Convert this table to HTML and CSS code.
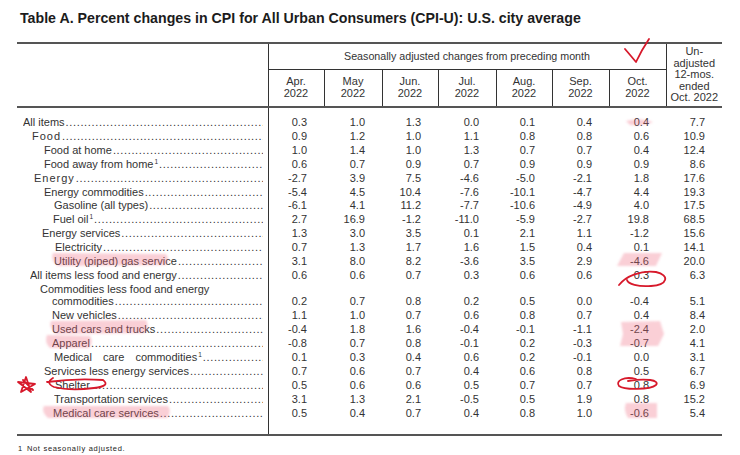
FILE: index.html
```html
<!DOCTYPE html>
<html>
<head>
<meta charset="utf-8">
<link rel="stylesheet" href="styles.css">
</head>
<body>
<div class="page">
  <h1 class="title">Table A. Percent changes in CPI for All Urban Consumers (CPI-U): U.S. city average</h1>
  <table class="cpi">
    <colgroup>
      <col class="c-lab"><col class="c56"><col class="c58"><col class="c56"><col class="c58"><col class="c56"><col class="c57"><col class="c57"><col class="c56">
    </colgroup>
    <thead>
      <tr class="hr1">
        <th class="lab-h" rowspan="2"></th>
        <th class="sa" colspan="7">Seasonally adjusted changes from preceding month</th>
        <th class="un" rowspan="2">Un-<br>adjusted<br>12-mos.<br>ended<br>Oct. 2022</th>
      </tr>
      <tr class="hr2">
        <th class="mo">Apr.<br>2022</th>
        <th class="mo">May<br>2022</th>
        <th class="mo">Jun.<br>2022</th>
        <th class="mo">Jul.<br>2022</th>
        <th class="mo">Aug.<br>2022</th>
        <th class="mo">Sep.<br>2022</th>
        <th class="mo">Oct.<br>2022</th>
      </tr>
    </thead>
    <tbody>
      <tr class="first"><td class="lab i6"><div class="lead"><span>All items</span></div></td><td>0.3</td><td>1.0</td><td>1.3</td><td>0.0</td><td>0.1</td><td>0.4</td><td>0.4</td><td>7.7</td></tr>
      <tr><td class="lab i15"><div class="lead"><span class="sp">Food</span></div></td><td>0.9</td><td>1.2</td><td>1.0</td><td>1.1</td><td>0.8</td><td>0.8</td><td>0.6</td><td>10.9</td></tr>
      <tr><td class="lab i27"><div class="lead"><span>Food at home</span></div></td><td>1.0</td><td>1.4</td><td>1.0</td><td>1.3</td><td>0.7</td><td>0.7</td><td>0.4</td><td>12.4</td></tr>
      <tr><td class="lab i27"><div class="lead"><span>Food away from home<sup>1</sup></span></div></td><td>0.6</td><td>0.7</td><td>0.9</td><td>0.7</td><td>0.9</td><td>0.9</td><td>0.9</td><td>8.6</td></tr>
      <tr><td class="lab i17"><div class="lead"><span class="sp">Energy</span></div></td><td>-2.7</td><td>3.9</td><td>7.5</td><td>-4.6</td><td>-5.0</td><td>-2.1</td><td>1.8</td><td>17.6</td></tr>
      <tr><td class="lab i27"><div class="lead"><span>Energy commodities</span></div></td><td>-5.4</td><td>4.5</td><td>10.4</td><td>-7.6</td><td>-10.1</td><td>-4.7</td><td>4.4</td><td>19.3</td></tr>
      <tr><td class="lab i37"><div class="lead"><span>Gasoline (all types)</span></div></td><td>-6.1</td><td>4.1</td><td>11.2</td><td>-7.7</td><td>-10.6</td><td>-4.9</td><td>4.0</td><td>17.5</td></tr>
      <tr><td class="lab i36"><div class="lead"><span>Fuel oil<sup>1</sup></span></div></td><td>2.7</td><td>16.9</td><td>-1.2</td><td>-11.0</td><td>-5.9</td><td>-2.7</td><td>19.8</td><td>68.5</td></tr>
      <tr><td class="lab i25"><div class="lead"><span>Energy services</span></div></td><td>1.3</td><td>3.0</td><td>3.5</td><td>0.1</td><td>2.1</td><td>1.1</td><td>-1.2</td><td>15.6</td></tr>
      <tr><td class="lab i38"><div class="lead"><span>Electricity</span></div></td><td>0.7</td><td>1.3</td><td>1.7</td><td>1.6</td><td>1.5</td><td>0.4</td><td>0.1</td><td>14.1</td></tr>
      <tr><td class="lab i37"><div class="lead"><span>Utility (piped) gas service</span></div></td><td>3.1</td><td>8.0</td><td>8.2</td><td>-3.6</td><td>3.5</td><td>2.9</td><td>-4.6</td><td>20.0</td></tr>
      <tr><td class="lab i13"><div class="lead"><span>All items less food and energy</span></div></td><td>0.6</td><td>0.6</td><td>0.7</td><td>0.3</td><td>0.6</td><td>0.6</td><td>0.3</td><td>6.3</td></tr>
      <tr class="two"><td class="lab i23"><div class="pre">Commodities less food and energy</div><div class="lead sub"><span>commodities</span></div></td><td>0.2</td><td>0.7</td><td>0.8</td><td>0.2</td><td>0.5</td><td>0.0</td><td>-0.4</td><td>5.1</td></tr>
      <tr><td class="lab i35"><div class="lead"><span>New vehicles</span></div></td><td>1.1</td><td>1.0</td><td>0.7</td><td>0.6</td><td>0.8</td><td>0.7</td><td>0.4</td><td>8.4</td></tr>
      <tr><td class="lab i35"><div class="lead"><span>Used cars and trucks</span></div></td><td>-0.4</td><td>1.8</td><td>1.6</td><td>-0.4</td><td>-0.1</td><td>-1.1</td><td>-2.4</td><td>2.0</td></tr>
      <tr><td class="lab i35"><div class="lead"><span>Apparel</span></div></td><td>-0.8</td><td>0.7</td><td>0.8</td><td>-0.1</td><td>0.2</td><td>-0.3</td><td>-0.7</td><td>4.1</td></tr>
      <tr><td class="lab i37"><div class="lead"><span class="wide">Medical care commodities<sup>1</sup></span></div></td><td>0.1</td><td>0.3</td><td>0.4</td><td>0.6</td><td>0.2</td><td>-0.1</td><td>0.0</td><td>3.1</td></tr>
      <tr><td class="lab i27"><div class="lead"><span>Services less energy services</span></div></td><td>0.7</td><td>0.6</td><td>0.7</td><td>0.4</td><td>0.6</td><td>0.8</td><td>0.5</td><td>6.7</td></tr>
      <tr><td class="lab i38"><div class="lead"><span>Shelter</span></div></td><td>0.5</td><td>0.6</td><td>0.6</td><td>0.5</td><td>0.7</td><td>0.7</td><td>0.8</td><td>6.9</td></tr>
      <tr><td class="lab i37"><div class="lead"><span>Transportation services</span></div></td><td>3.1</td><td>1.3</td><td>2.1</td><td>-0.5</td><td>0.5</td><td>1.9</td><td>0.8</td><td>15.2</td></tr>
      <tr class="last"><td class="lab i36"><div class="lead"><span>Medical care services</span></div></td><td>0.5</td><td>0.4</td><td>0.7</td><td>0.4</td><td>0.8</td><td>1.0</td><td>-0.6</td><td>5.4</td></tr>
    </tbody>
  </table>
  <p class="foot"><span class="fn">1</span>Not seasonally adjusted.</p>

  <svg class="marks" width="740" height="455" viewBox="0 0 740 455" aria-hidden="true">
    <defs>
      <filter id="soft" x="-20%" y="-50%" width="140%" height="200%"><feGaussianBlur stdDeviation="1.2"/></filter>
    </defs>
    <g class="hl" filter="url(#soft)">
      <path d="M626 121 Q640 117 653 122 Q645 126 630 125 Z"/>
      <path d="M53 253 L166 254 Q170 259 166 265 L58 266 Q50 260 53 253 Z"/>
      <path d="M624 253 L662 253 L656 266 L617 266 Z"/>
      <path d="M621 322 L660 321 L664 334 L658 346 L620 346 L623 334 Z"/>
      <path d="M51 321 L146 320 Q150 327 145 333 L56 334 Q48 327 51 321 Z"/>
      <path d="M47 335 L90 336 Q94 342 89 348 L50 348 Q44 342 47 335 Z"/>
      <path d="M44 406 L168 406 Q172 412 167 418 L48 418 Q41 412 44 406 Z"/>
      <path d="M626 403 L657 403 L657 418 L628 418 Q623 410 626 403 Z"/>
    </g>
    <g class="ink">
      <path d="M625 49 Q631 56 636 62 Q641 51 649 39"/>
      <path d="M619 285 C626 276 641 270 656 272 C670 275 668 285 651 286 C638 287 628 284 627 280"/>
      <path d="M636 379 C624 376 615 381 619 386 C624 390 650 390 656 385 C660 380 646 378 628 381"/>
      <path d="M47 382 Q76 378 103 380 Q111 386 94 388 Q70 391 54 387 Q45 383 53 378"/>
      <path d="M21 392 L26 377 L31 392 L18 382 L35 384 Z M23 380 L33 390"/>
    </g>
  </svg>
</div>
</body>
</html>
```

FILE: styles.css
```css
* { box-sizing: border-box; }

html, body {
  margin: 0;
  padding: 0;
  background: #ffffff;
}

.page {
  position: relative;
  width: 740px;
  height: 455px;
  padding: 9px 0 0 17px;
  font-family: "Liberation Sans", Arial, sans-serif;
  color: #333333;
  overflow: hidden;
}

.title {
  margin: 0 0 14px 3px;
  font-size: 14.2px;
  line-height: 19px;
  font-weight: bold;
  color: #1c1c1c;
}

.cpi {
  width: 705px;
  table-layout: fixed;
  border-collapse: collapse;
  font-size: 11px;
  border-top: 2px solid #555555;
  border-bottom: 2px solid #555555;
}

.c-lab { width: 251px; }
.c56 { width: 56px; }
.c57 { width: 57px; }
.c58 { width: 58px; }

.cpi th {
  font-weight: normal;
  padding: 0;
  line-height: 11.6px;
  color: #333333;
}

.hr1 { height: 26px; }
.hr2 { height: 38px; }

.lab-h {
  border-right: 1px solid #333333;
  border-bottom: 2px solid #555555;
}

.cpi th.sa {
  border-bottom: 1px solid #333333;
  text-align: center;
  vertical-align: middle;
  padding-top: 1px;
  font-size: 10.7px;
}

.mo {
  border-right: 1px solid #333333;
  border-bottom: 2px solid #555555;
  text-align: center;
  vertical-align: middle;
}

.un {
  border-left: 1px solid #333333;
  border-bottom: 2px solid #555555;
  text-align: center;
  vertical-align: middle;
}

.cpi td {
  padding: 0 17px 0 0;
  height: 13.9px;
  line-height: 13.9px;
  text-align: right;
  white-space: nowrap;
  vertical-align: bottom;
}

.cpi td.lab {
  text-align: left;
  padding-right: 5px;
  border-right: 1px solid #333333;
}

.cpi .first td { padding-top: 8px; height: 21.9px; }
.cpi .last td { padding-bottom: 13px; height: 26.9px; }
.cpi .two td { height: 26.5px; }

.lead {
  display: flex;
  overflow: hidden;
  white-space: nowrap;
}

.lead > span { flex: none; }

.lead::after {
  content: "....................................................................................................................................................";
  flex: 1 1 auto;
  min-width: 0;
  overflow: hidden;
  letter-spacing: 0.65px;
  padding-left: 1px;
}

.pre { line-height: 12.6px; }

.sub { padding-left: 12px; }

.sp { letter-spacing: 1px; }
.wide { word-spacing: 8px; }

sup {
  font-size: 6.5px;
  line-height: 0;
  vertical-align: 4px;
  padding-left: 1px;
}

.cpi td.i6 { padding-left: 6px; }
.cpi td.i13 { padding-left: 13px; }
.cpi td.i15 { padding-left: 15px; }
.cpi td.i17 { padding-left: 17px; }
.cpi td.i23 { padding-left: 23px; }
.cpi td.i25 { padding-left: 25px; }
.cpi td.i27 { padding-left: 27px; }
.cpi td.i35 { padding-left: 35px; }
.cpi td.i36 { padding-left: 36px; }
.cpi td.i37 { padding-left: 37px; }
.cpi td.i38 { padding-left: 38px; }

.foot {
  margin: 8px 0 0 1px;
  font-size: 7.5px;
  line-height: 9px;
  letter-spacing: 0.7px;
  color: #222222;
}

.fn {
  margin-right: 4px;
}

.marks {
  position: absolute;
  left: 0;
  top: 0;
  pointer-events: none;
}

.hl path {
  fill: #f06e82;
  opacity: 0.32;
}

.ink path {
  fill: none;
  stroke: #d7192b;
  stroke-width: 1.8;
  stroke-linecap: round;
  stroke-linejoin: round;
}
```
